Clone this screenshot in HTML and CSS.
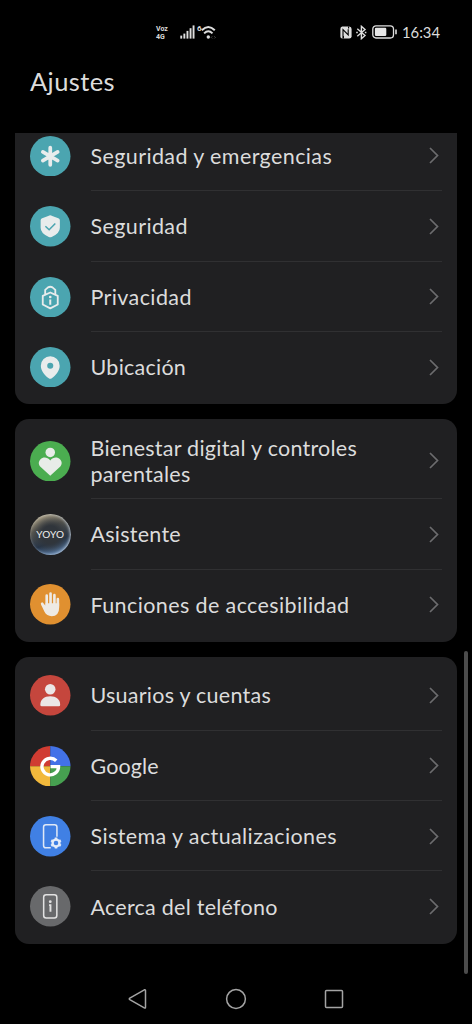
FILE: index.html
```html
<!DOCTYPE html>
<html lang="es">
<head>
<meta charset="utf-8">
<title>Ajustes</title>
<link rel="stylesheet" href="styles.css">
</head>
<body>
<div class="screen">
  <header class="status">
    <div class="status-left">
      <div class="volte"><span>Voz</span><span>4G</span></div>
      <svg class="signal" width="15" height="14" viewBox="0 0 15 14" fill="#dedede"><rect x="0.3" y="10.6" width="1.9" height="3"/><rect x="3.4" y="8.6" width="1.9" height="5"/><rect x="6.5" y="5.9" width="1.9" height="7.7"/><rect x="9.6" y="3.2" width="1.9" height="10.4"/><rect x="12.6" y="0.4" width="1.9" height="13.2"/></svg>
      <span class="wifi-gen">6</span>
      <svg class="wifi" width="18" height="15" viewBox="0 0 18 15" fill="none" stroke="#dedede" stroke-width="2"><path d="M0.8 5.2Q7.3-1.4 13.8 5.2M3.1 8.4Q7.3 4.2 11.5 8.4"/><circle cx="7.3" cy="12" r="1.7" fill="#dedede" stroke="none"/><path d="M11.2 11.400 10.200 12.400 11.200 13.400M13.400 11.400 14.400 12.400 13.400 13.400" stroke="#555" stroke-width="1"/></svg>
    </div>
    <div class="status-right">
      <svg width="12" height="13" viewBox="0 0 12 13"><path d="M2.2.5H9.2Q11.6.5 11.6 3V10.3Q11.6 12.5 9.2 12.5H2.2Q.4 12.5.4 10.3V3Q.4.5 2.2.5Z" fill="#dedede"/><path d="M3 12.5V3.6L8.2 9V3.2M8.6.5V2.6M3.4 10V12.5" fill="none" stroke="#000" stroke-width="1.1"/></svg>
      <svg class="bt" width="11" height="15" viewBox="0 0 11 15" fill="none" stroke="#dedede" stroke-width="1.4"><path d="M1.3 3.7 9 10.6 5.4 13.7V1.3L9 4.4 1.3 11.3"/><path d="M.2 7.5H1.8M8.8 7.5H10.4"/></svg>
      <svg class="battery" width="26" height="14" viewBox="0 0 26 14"><rect x=".8" y=".8" width="20.7" height="12.2" rx="3.2" fill="none" stroke="#dedede" stroke-width="1.3"/><rect x="2.9" y="2.8" width="11.4" height="8.2" rx="1.2" fill="#e6e6e6"/><path d="M24 4.6V9.2" stroke="#dedede" stroke-width="1.6"/></svg>
      <span class="clock">16:34</span>
    </div>
  </header>
  <h1 class="title">Ajustes</h1>
  <main class="viewport">
    <div class="list">
      <section class="card">
        <div class="row">
          <svg class="icon" viewBox="0 0 40 40"><circle cx="20" cy="20" r="20" fill="#4ba5b0"/><path d="M20 11.6V28.4M12.7 15.8 27.3 24.2M12.7 24.2 27.3 15.8" stroke="#e8ecec" stroke-width="3.7" stroke-linecap="round"/></svg>
          <div class="body"><span class="label wide">Seguridad y emergencias</span><svg class="chev" viewBox="0 0 10 17"><path d="M1 1 8.5 8.5 1 16"/></svg></div>
        </div>
        <div class="row">
          <svg class="icon" viewBox="0 0 40 40"><circle cx="20" cy="20" r="20" fill="#4ba5b0"/><path d="M20 9.2Q20.8 9.2 22 9.9L28 12Q29.5 12.6 29.5 14V21.5Q29.5 27.2 21.4 30.5Q20 31.1 18.6 30.5Q10.500 27.2 10.500 21.500V14Q10.500 12.6 12 12L18 9.900Q19.200 9.200 20 9.200Z" fill="#e8ecec"/><path d="M15.200 20 18.900 23.500 25 17.300" fill="none" stroke="#4ba5b0" stroke-width="1.500"/></svg>
          <div class="body"><span class="label wide">Seguridad</span><svg class="chev" viewBox="0 0 10 17"><path d="M1 1 8.5 8.5 1 16"/></svg></div>
        </div>
        <div class="row">
          <svg class="icon" viewBox="0 0 40 40"><circle cx="20" cy="20" r="20" fill="#4ba5b0"/><g fill="none" stroke="#e8ecec" stroke-width="1.800" stroke-linejoin="round"><path d="M20 15.300 27.400 18.600V27.200L20 31 12.600 27.200V18.600Z"/><path d="M15 17.300V12.700L17.800 10.200Q20 9 22.200 10.200L25 12.700V17.300"/></g><circle cx="20" cy="19.800" r="1.300" fill="#e8ecec"/><path d="M20 22.200V27.400" fill="none" stroke="#e8ecec" stroke-width="2"/></svg>
          <div class="body"><span class="label wide">Privacidad</span><svg class="chev" viewBox="0 0 10 17"><path d="M1 1 8.5 8.5 1 16"/></svg></div>
        </div>
        <div class="row">
          <svg class="icon" viewBox="0 0 40 40"><circle cx="20" cy="20" r="20" fill="#4ba5b0"/><path d="M20 9.200A9.300 9.300 0 0 1 29.300 18.500C29.300 23.500 25.200 28.200 21.500 30.900Q20 32 18.500 30.900C14.800 28.200 10.700 23.500 10.700 18.500A9.300 9.300 0 0 1 20 9.200Z" fill="#e8ecec"/><circle cx="20" cy="18.500" r="3" fill="#4ba5b0"/></svg>
          <div class="body"><span class="label">Ubicación</span><svg class="chev" viewBox="0 0 10 17"><path d="M1 1 8.5 8.5 1 16"/></svg></div>
        </div>
      </section>
      <section class="card">
        <div class="row tall">
          <svg class="icon" viewBox="0 0 40 40"><circle cx="20" cy="20" r="20" fill="#4bad50"/><circle cx="20" cy="11.300" r="4.700" fill="#e8ece8"/><path d="M20 19.200C23 15.500 27.300 15.900 29.600 18C32 20.400 31.700 23.400 29.700 25.400L20 34.200 10.300 25.400C8.300 23.400 8 20.400 10.400 18C12.700 15.900 17 15.500 20 19.200Z" fill="#e8ece8"/></svg>
          <div class="body"><span class="label">Bienestar digital y controles<br>parentales</span><svg class="chev" viewBox="0 0 10 17"><path d="M1 1 8.5 8.5 1 16"/></svg></div>
        </div>
        <div class="row">
          <div class="icon yoyo">YOYO</div>
          <div class="body"><span class="label">Asistente</span><svg class="chev" viewBox="0 0 10 17"><path d="M1 1 8.5 8.5 1 16"/></svg></div>
        </div>
        <div class="row">
          <svg class="icon" viewBox="0 0 40 40"><circle cx="20" cy="20" r="20" fill="#e09030"/><path d="M12 19.500 15.500 24M16.500 11.500V22M20.300 9.500V22M24.100 11V22M27.500 15V22" fill="none" stroke="#eeeae4" stroke-width="2.600" stroke-linecap="round"/><path d="M15.300 19H28.800V23.500Q28.800 31.800 21.400 31.800Q16.600 31.800 14.300 27.500L10.900 20.300 13 19.200 15.300 22Z" fill="#eeeae4"/></svg>
          <div class="body"><span class="label wide">Funciones de accesibilidad</span><svg class="chev" viewBox="0 0 10 17"><path d="M1 1 8.5 8.5 1 16"/></svg></div>
        </div>
      </section>
      <section class="card">
        <div class="row">
          <svg class="icon" viewBox="0 0 40 40"><circle cx="20" cy="20" r="20" fill="#c5463d"/><circle cx="20" cy="14" r="5.200" fill="#ebe6e6"/><path d="M10.200 29.300C10.200 24 14.200 21 20 21S29.800 24 29.800 29.300Q29.800 30.900 28.300 30.900H11.700Q10.200 30.900 10.200 29.300Z" fill="#ebe6e6"/></svg>
          <div class="body"><span class="label">Usuarios y cuentas</span><svg class="chev" viewBox="0 0 10 17"><path d="M1 1 8.5 8.5 1 16"/></svg></div>
        </div>
        <div class="row">
          <svg class="icon" viewBox="0 0 40 40"><path d="M20 20V0A20 20 0 0 0 0 20Z" fill="#d03c32"/><path d="M20 20V0A20 20 0 0 1 40 20Z" fill="#4272e8"/><path d="M20 20H0A20 20 0 0 0 20 40Z" fill="#f2b93c"/><path d="M20 20H40A20 20 0 0 1 20 40Z" fill="#46a050"/><path d="M25.900 14.600A8.200 8.200 0 1 0 28.200 20.400H20.300" fill="none" stroke="#fff" stroke-width="3.300"/></svg>
          <div class="body"><span class="label tight">Google</span><svg class="chev" viewBox="0 0 10 17"><path d="M1 1 8.5 8.5 1 16"/></svg></div>
        </div>
        <div class="row">
          <svg class="icon" viewBox="0 0 40 40"><circle cx="20" cy="20" r="20" fill="#4080e4"/><path d="M20.500 31.400H15.700Q13.400 31.400 13.400 29.100V10.900Q13.400 8.600 15.700 8.600H24.300Q26.600 8.600 26.600 10.900V20.500" fill="none" stroke="#dfe8f6" stroke-width="1.500"/><circle cx="25.700" cy="26.700" r="3.400" fill="none" stroke="#e4ecf8" stroke-width="2.300"/><path d="M25.700 21.300V23M25.700 30.400V32.100M21 24 22.500 24.900M28.900 28.500 30.400 29.400M21 29.400 22.500 28.500M28.900 24.900 30.400 24" stroke="#e4ecf8" stroke-width="2.500"/></svg>
          <div class="body"><span class="label wide">Sistema y actualizaciones</span><svg class="chev" viewBox="0 0 10 17"><path d="M1 1 8.5 8.5 1 16"/></svg></div>
        </div>
        <div class="row">
          <svg class="icon" viewBox="0 0 40 40"><circle cx="20" cy="20" r="20" fill="#68696b"/><rect x="13.500" y="8.700" width="13" height="23" rx="2.500" fill="none" stroke="#e2e2e2" stroke-width="1.500"/><circle cx="20" cy="15.500" r="1.400" fill="#e2e2e2"/><path d="M18.800 18.900H20.200V25.400" fill="none" stroke="#e2e2e2" stroke-width="1.900"/></svg>
          <div class="body"><span class="label">Acerca del teléfono</span><svg class="chev" viewBox="0 0 10 17"><path d="M1 1 8.5 8.5 1 16"/></svg></div>
        </div>
      </section>
    </div>
    <div class="scrollbar"></div>
  </main>
  <nav class="navbar">
    <svg width="22" height="22" viewBox="0 0 22 22"><path d="M2.800 10.200 17.300 1.800Q18.500 1.300 18.500 2.600V19.200Q18.500 20.500 17.300 19.900L2.800 11.600Q1.800 10.900 2.800 10.200Z"/></svg>
    <svg width="22" height="22" viewBox="0 0 22 22"><circle cx="11" cy="11" r="9.400"/></svg>
    <svg width="22" height="22" viewBox="0 0 22 22"><rect x="2.500" y="2.500" width="17" height="17" rx="1"/></svg>
  </nav>
</div>
</body>
</html>
```
FILE: styles.css
```css
* { box-sizing: border-box; }
body { margin: 0; background: #000; }
.screen {
  width: 472px;
  height: 1024px;
  display: flex;
  flex-direction: column;
  overflow: hidden;
  background: #000;
  color: #dcdcdc;
  font-family: Lato, "Open Sans", sans-serif;
}
.status {
  height: 64px;
  padding: 0 32px 0 156px;
  display: flex;
  justify-content: space-between;
  align-items: center;
}
.status-left, .status-right { display: flex; align-items: center; }
.volte {
  display: flex;
  flex-direction: column;
  width: 24px;
  padding-top: 1px;
  font: 700 7px/8px Roboto, sans-serif;
}
.wifi-gen { width: 5px; margin: -8px 0 0 2px; font: 700 8px/9px Roboto, sans-serif; }
.wifi { margin-left: -1px; margin-right: 1px; }
.bt { margin-left: 4px; }
.battery { margin-left: 5px; }
.clock { width: 38px; margin-left: 4px; font: 400 14.8px/20px Lato, sans-serif; white-space: nowrap; }
.title {
  height: 69px;
  margin: 0;
  padding-left: 30px;
  font-size: 25.5px;
  line-height: 35px;
  font-weight: 400;
  letter-spacing: .4px;
}
.viewport {
  height: 842px;
  position: relative;
  overflow: hidden;
}
.list {
  margin: -15.5px 15px 0;
  display: flex;
  flex-direction: column;
  gap: 15.2px;
}
.card {
  padding: 3.3px 15px 1.9px;
  border-radius: 14px;
  background: #202022;
}
.row { display: flex; align-items: center; height: 70.4px; }
.tall { height: 76.4px; }
.icon { width: 40.5px; height: 40.5px; flex: none; margin-right: 20px; }
.body {
  flex: 1;
  height: 100%;
  display: flex;
  align-items: center;
  justify-content: space-between;
  padding: 1px 3px 0 0;
  border-bottom: 1px solid #303032;
}
.row:last-child .body { border-bottom-color: transparent; }
.label { font-size: 21.5px; line-height: 26px; white-space: nowrap; letter-spacing: .25px; }
.wide { letter-spacing: .39px; }
.tight { letter-spacing: .13px; }
.chev { width: 10px; height: 17px; fill: none; stroke: #6c6c6e; stroke-width: 1.7; }
.yoyo {
  display: flex;
  align-items: center;
  justify-content: center;
  border-radius: 50%;
  background: radial-gradient(circle at 50% 50%, #30353b 0 30%, transparent 68%), linear-gradient(160deg, #b9ad90 8%, #5c5a52 35%, #25354a 65%, #6f98c8 92%);
  box-shadow: inset -1px 0 3px #c0c8d0;
  color: #eee;
  font-size: 10px;
  letter-spacing: .2px;
}
.scrollbar {
  position: absolute;
  right: 4px;
  top: 518px;
  width: 4px;
  height: 323px;
  border-radius: 2px;
  background: #4c4c4c;
}
.navbar {
  height: 49px;
  padding: 0 127px 1px;
  display: flex;
  justify-content: space-between;
  align-items: center;
}
.navbar svg { fill: none; stroke: #a4a4a4; stroke-width: 1.5; }
```
